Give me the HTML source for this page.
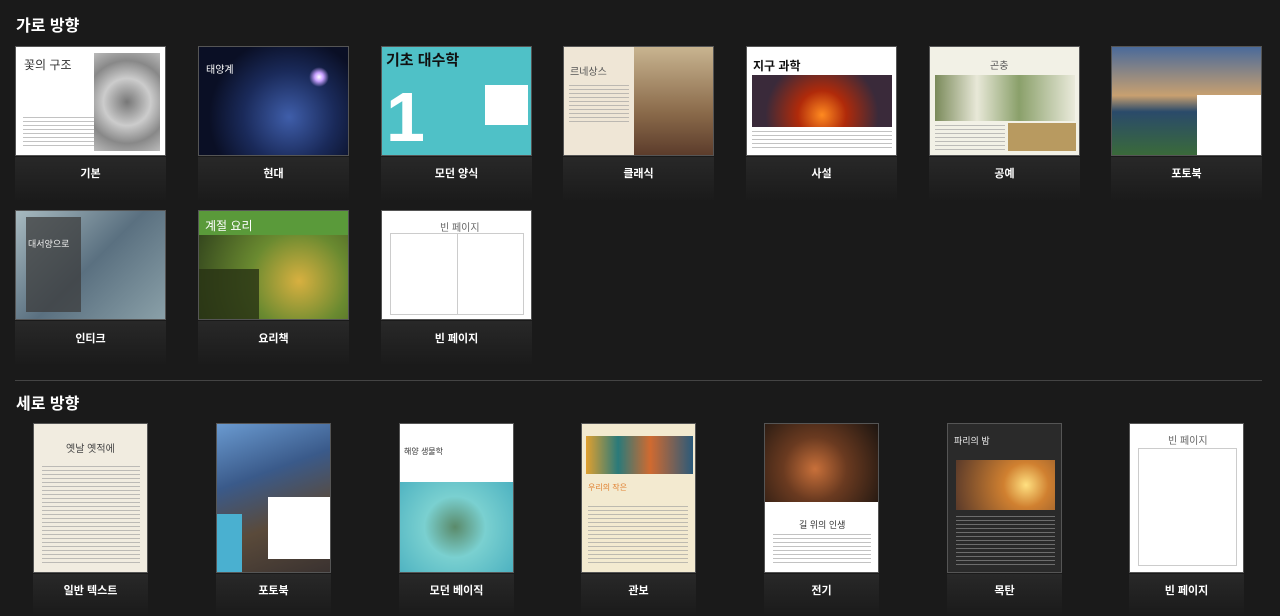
<!DOCTYPE html>
<html><head><meta charset="utf-8"><style>
body{margin:0;width:1280px;height:616px;background:#1a1a1a;overflow:hidden;font-family:"Liberation Sans","Noto Sans CJK KR",sans-serif;position:relative}
h2{position:absolute;margin:0;color:#fff;font-size:16px;font-weight:bold;left:16px}
.t{position:absolute;overflow:hidden;box-sizing:border-box;border:1px solid #555}
.ref{position:absolute;background:linear-gradient(#2c2c2c,#1a1a1a);opacity:.8}
.l{position:absolute;color:#fff;font-size:11px;font-weight:bold;text-align:center}
.hr{position:absolute;left:15px;width:1247px;top:380px;height:1px;background:#444}
.tx{position:absolute;font-size:10px}
.ln{position:absolute;height:40px;background:repeating-linear-gradient(#999 0 1px,transparent 1px 4px);opacity:.6}
</style></head><body>
<h2 style="top:12px">가로 방향</h2>
<h2 style="top:390px">세로 방향</h2>
<div class="hr"></div>

<div class="ref" style="left:15px;top:157px;width:151px;height:45px"></div>
<div class="t" style="left:15px;top:46px;width:151px;height:110px;background:#fff">
<div class="tx" style="left:8px;top:9px;font-size:12px;color:#333">꽃의 구조</div>
<div class="ln" style="left:7px;top:70px;width:75px;height:30px"></div>
<div style="position:absolute;left:78px;top:6px;width:66px;height:98px;background:radial-gradient(circle,#777,#ccc 40%,#888 70%,#bbb)"></div></div>
<div class="l" style="left:15px;top:165px;width:151px">기본</div>

<div class="ref" style="left:198px;top:157px;width:151px;height:45px"></div>
<div class="t" style="left:198px;top:46px;width:151px;height:110px;background:radial-gradient(circle at 90px 70px,#3f5eaa,#1a2a5a 40%,#0a0f25 70%)">
<div style="position:absolute;left:110px;top:20px;width:20px;height:20px;border-radius:50%;background:radial-gradient(#fff,#c8a0ff 30%,transparent 70%)"></div>
<div class="tx" style="left:7px;top:14px;color:#fff;font-size:10px">태양계</div></div>
<div class="l" style="left:198px;top:165px;width:151px">현대</div>

<div class="ref" style="left:381px;top:157px;width:151px;height:45px"></div>
<div class="t" style="left:381px;top:46px;width:151px;height:110px;background:#4fc1c7">
<div class="tx" style="left:4px;top:2px;color:#111;font-size:15px;font-weight:bold">기초 대수학</div>
<div style="position:absolute;left:4px;top:40px;width:30px;height:68px;color:#fff;font-size:70px;line-height:60px;font-weight:bold">1</div>
<div style="position:absolute;left:103px;top:38px;width:43px;height:40px;background:#fff"></div></div>
<div class="l" style="left:381px;top:165px;width:151px">모던 양식</div>

<div class="ref" style="left:563px;top:157px;width:151px;height:45px"></div>
<div class="t" style="left:563px;top:46px;width:151px;height:110px;background:#efe6d6">
<div class="tx" style="left:6px;top:16px;color:#555;font-size:10px">르네상스</div>
<div class="ln" style="left:5px;top:38px;width:60px"></div>
<div style="position:absolute;left:70px;top:0;width:81px;height:110px;background:linear-gradient(#c8b490,#8a6a4a 60%,#5a3a2a)"></div></div>
<div class="l" style="left:563px;top:165px;width:151px">클래식</div>

<div class="ref" style="left:746px;top:157px;width:151px;height:45px"></div>
<div class="t" style="left:746px;top:46px;width:151px;height:110px;background:#fff">
<div class="tx" style="left:6px;top:10px;color:#111;font-size:12px;font-weight:bold">지구 과학</div>
<div style="position:absolute;left:5px;top:28px;width:140px;height:52px;background:radial-gradient(circle at 70px 40px,#ff8a20,#b02a0a 30%,#3a2a3a 70%)"></div>
<div class="ln" style="left:5px;top:84px;width:140px;height:20px"></div></div>
<div class="l" style="left:746px;top:165px;width:151px">사설</div>

<div class="ref" style="left:929px;top:157px;width:151px;height:45px"></div>
<div class="t" style="left:929px;top:46px;width:151px;height:110px;background:#f2f1e6">
<div class="tx" style="left:60px;top:10px;color:#555">곤충</div>
<div style="position:absolute;left:5px;top:28px;width:140px;height:46px;background:linear-gradient(90deg,#7a8a5a,#e8e8d8 30%,#8aa06a 60%,#eaeadb)"></div>
<div style="position:absolute;left:78px;top:76px;width:68px;height:28px;background:#b89a60"></div>
<div class="ln" style="left:5px;top:78px;width:70px;height:26px"></div></div>
<div class="l" style="left:929px;top:165px;width:151px">공예</div>

<div class="ref" style="left:1111px;top:157px;width:151px;height:45px"></div>
<div class="t" style="left:1111px;top:46px;width:151px;height:110px;background:linear-gradient(#4a6a9a,#c8a070 45%,#2a4a6a 60%,#3a6a3a)">
<div style="position:absolute;left:85px;top:48px;width:66px;height:60px;background:#fff"></div></div>
<div class="l" style="left:1111px;top:165px;width:151px">포토북</div>

<div class="ref" style="left:15px;top:321px;width:151px;height:45px"></div>
<div class="t" style="left:15px;top:210px;width:151px;height:110px;background:linear-gradient(135deg,#a8bac0,#5a7080 50%,#8aa0a8)">
<div style="position:absolute;left:10px;top:6px;width:55px;height:95px;background:rgba(60,60,60,.75)"></div>
<div class="tx" style="left:12px;top:26px;color:#eee;font-size:9px">대서양으로</div></div>
<div class="l" style="left:15px;top:330px;width:151px">인티크</div>

<div class="ref" style="left:198px;top:321px;width:151px;height:45px"></div>
<div class="t" style="left:198px;top:210px;width:151px;height:110px;background:radial-gradient(circle at 100px 70px,#d8b040,#6a8a30 40%,#2a3a1a)">
<div style="position:absolute;left:0;top:0;width:151px;height:24px;background:#5a9a3a"></div>
<div class="tx" style="left:6px;top:6px;color:#fff;font-size:12px">계절 요리</div>
<div style="position:absolute;left:0;top:58px;width:60px;height:52px;background:rgba(40,50,20,.8)"></div></div>
<div class="l" style="left:198px;top:330px;width:151px">요리책</div>

<div class="ref" style="left:381px;top:321px;width:151px;height:45px"></div>
<div class="t" style="left:381px;top:210px;width:151px;height:110px;background:#fff">
<div class="tx" style="left:58px;top:8px;color:#666">빈 페이지</div>
<div style="position:absolute;left:8px;top:22px;width:134px;height:82px;border:1px solid #ccc;box-sizing:border-box"></div>
<div style="position:absolute;left:75px;top:22px;width:1px;height:82px;background:#ccc"></div></div>
<div class="l" style="left:381px;top:330px;width:151px">빈 페이지</div>

<div class="ref" style="left:33px;top:574px;width:115px;height:42px"></div>
<div class="t" style="left:33px;top:423px;width:115px;height:150px;background:#f1ece0">
<div class="tx" style="left:32px;top:16px;color:#444;font-size:10px">옛날 옛적에</div>
<div class="ln" style="left:8px;top:42px;width:98px;height:100px"></div></div>
<div class="l" style="left:33px;top:582px;width:115px">일반 텍스트</div>

<div class="ref" style="left:216px;top:574px;width:115px;height:42px"></div>
<div class="t" style="left:216px;top:423px;width:115px;height:150px;background:linear-gradient(160deg,#6a9ad0,#3a5a8a 35%,#5a4a3a 65%,#3a3230)">
<div style="position:absolute;left:0;top:90px;width:25px;height:60px;background:#4ab0d0"></div>
<div style="position:absolute;left:51px;top:73px;width:63px;height:62px;background:#fff"></div></div>
<div class="l" style="left:216px;top:582px;width:115px">포토북</div>

<div class="ref" style="left:399px;top:574px;width:115px;height:42px"></div>
<div class="t" style="left:399px;top:423px;width:115px;height:150px;background:#fff">
<div class="tx" style="left:4px;top:22px;color:#333;font-size:8px">해양 생물학</div>
<div style="position:absolute;left:0;top:58px;width:115px;height:92px;background:radial-gradient(circle at 55px 45px,#5a8a6a,#7ad0d0 40%,#4ab0c0)"></div></div>
<div class="l" style="left:399px;top:582px;width:115px">모던 베이직</div>

<div class="ref" style="left:581px;top:574px;width:115px;height:42px"></div>
<div class="t" style="left:581px;top:423px;width:115px;height:150px;background:#f3ead0">
<div style="position:absolute;left:4px;top:12px;width:107px;height:38px;background:linear-gradient(90deg,#e0a030,#2a7a7a 30%,#d06a30 60%,#2a5a7a)"></div>
<div class="tx" style="left:6px;top:58px;color:#e08030;font-size:8px">우리의 작은</div>
<div class="ln" style="left:6px;top:82px;width:100px;height:60px"></div></div>
<div class="l" style="left:581px;top:582px;width:115px">관보</div>

<div class="ref" style="left:764px;top:574px;width:115px;height:42px"></div>
<div class="t" style="left:764px;top:423px;width:115px;height:150px;background:#fff">
<div style="position:absolute;left:0;top:0;width:115px;height:78px;background:radial-gradient(circle at 50px 45px,#c8703a,#6a3a20 40%,#1a1410)"></div>
<div class="tx" style="left:34px;top:94px;color:#333;font-size:9px">길 위의 인생</div>
<div class="ln" style="left:8px;top:110px;width:98px;height:32px"></div></div>
<div class="l" style="left:764px;top:582px;width:115px">전기</div>

<div class="ref" style="left:947px;top:574px;width:115px;height:42px"></div>
<div class="t" style="left:947px;top:423px;width:115px;height:150px;background:#2a2a2a">
<div class="tx" style="left:6px;top:10px;color:#eee;font-size:9px">파리의 밤</div>
<div style="position:absolute;left:8px;top:36px;width:99px;height:50px;background:radial-gradient(circle at 70px 25px,#ffe080,#d08030 30%,#5a3a2a)"></div>
<div class="ln" style="left:8px;top:92px;width:99px;height:50px"></div></div>
<div class="l" style="left:947px;top:582px;width:115px">목탄</div>

<div class="ref" style="left:1129px;top:574px;width:115px;height:42px"></div>
<div class="t" style="left:1129px;top:423px;width:115px;height:150px;background:#fff">
<div class="tx" style="left:38px;top:8px;color:#666">빈 페이지</div>
<div style="position:absolute;left:8px;top:24px;width:99px;height:118px;border:1px solid #ccc;box-sizing:border-box"></div></div>
<div class="l" style="left:1129px;top:582px;width:115px">빈 페이지</div>
</body></html>
